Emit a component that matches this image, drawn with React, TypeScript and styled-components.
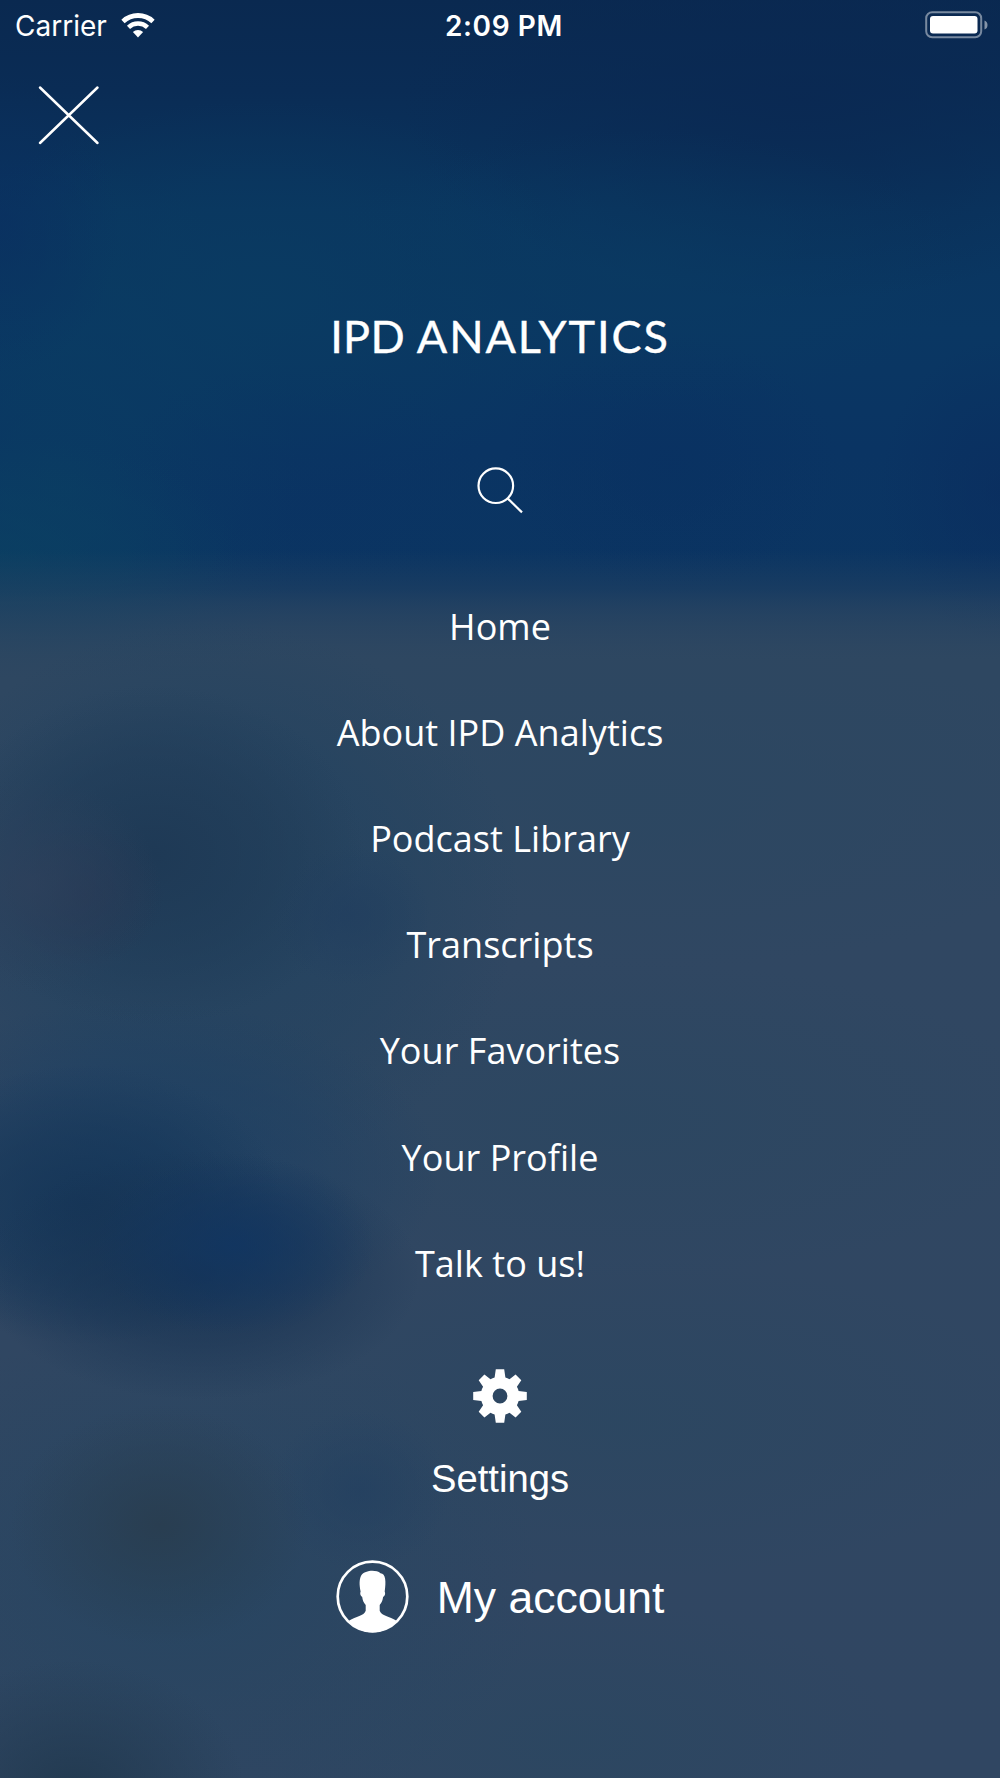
import React from "react";
import styled, { createGlobalStyle } from "styled-components";

const GlobalStyle = createGlobalStyle`
  *, *::before, *::after { box-sizing: border-box; }
  body { margin: 0; background: #2f4762; }
`;

const Screen = styled.main`
  display: flex;
  flex-direction: column;
  width: 1000px;
  height: 1778px;
  overflow: hidden;
  color: #fff;
  background:
    radial-gradient(ellipse 170px 130px at 75px 1790px, rgba(33, 57, 79, 0.9), rgba(33, 57, 79, 0.4) 55%, rgba(33, 57, 79, 0)),
    radial-gradient(ellipse 150px 120px at 160px 1525px, rgba(41, 61, 79, 0.9), rgba(41, 61, 79, 0.4) 55%, rgba(41, 61, 79, 0)),
    radial-gradient(ellipse 90px 80px at 360px 1490px, rgba(35, 64, 96, 0.75), rgba(35, 64, 96, 0)),
    radial-gradient(ellipse 140px 90px at 235px 1245px, rgba(16, 53, 98, 0.8), rgba(16, 53, 98, 0.4) 50%, rgba(16, 53, 98, 0)),
    radial-gradient(ellipse 220px 125px at 200px 1275px, rgba(22, 50, 82, 0.85), rgba(22, 50, 82, 0.45) 55%, rgba(22, 50, 82, 0)),
    radial-gradient(ellipse 200px 140px at 85px 1205px, rgba(20, 52, 86, 0.85), rgba(20, 52, 86, 0.45) 55%, rgba(20, 52, 86, 0)),
    radial-gradient(ellipse 300px 170px at 140px 1170px, rgba(27, 63, 99, 0.9), rgba(27, 63, 99, 0.45) 60%, rgba(27, 63, 99, 0)),
    radial-gradient(ellipse 80px 70px at 350px 915px, rgba(33, 62, 95, 0.75), rgba(33, 62, 95, 0)),
    radial-gradient(ellipse 130px 110px at 30px 885px, rgba(46, 65, 92, 0.8), rgba(46, 65, 92, 0)),
    radial-gradient(ellipse 80px 70px at 85px 895px, rgba(36, 54, 82, 0.7), rgba(36, 54, 82, 0)),
    radial-gradient(ellipse 210px 170px at 155px 855px, rgba(30, 57, 85, 0.95), rgba(30, 57, 85, 0.5) 55%, rgba(30, 57, 85, 0)),
    radial-gradient(ellipse 310px 280px at 210px 900px, rgba(33, 66, 95, 0.85), rgba(33, 66, 95, 0.5) 60%, rgba(33, 66, 95, 0)),
    radial-gradient(ellipse 360px 260px at 180px 1580px, rgba(37, 69, 97, 0.8), rgba(37, 69, 97, 0)),
    radial-gradient(ellipse 430px 160px at 620px 1120px, rgba(43, 71, 97, 0.8), rgba(43, 71, 97, 0)),
    radial-gradient(ellipse 430px 160px at 620px 1420px, rgba(43, 71, 97, 0.8), rgba(43, 71, 97, 0)),
    radial-gradient(ellipse 480px 170px at 640px 800px, rgba(43, 71, 97, 0.75), rgba(43, 71, 97, 0)),
    radial-gradient(ellipse 330px 140px at 570px 1740px, rgba(43, 71, 97, 0.8), rgba(43, 71, 97, 0)),
    linear-gradient(to bottom, rgba(46, 71, 97, 0) 550px, rgba(46, 71, 97, 0.5) 602px, #2e4761 680px, #304762 900px, #304662 1778px),
    radial-gradient(ellipse 240px 120px at 0 555px, rgba(10, 66, 98, 0.6), rgba(10, 66, 98, 0)),
    radial-gradient(ellipse 120px 150px at 1000px 490px, rgba(10, 44, 94, 0.6), rgba(10, 44, 94, 0)),
    radial-gradient(ellipse 170px 130px at 670px 465px, rgba(9, 48, 97, 0.6), rgba(9, 48, 97, 0)),
    radial-gradient(ellipse 190px 120px at 300px 480px, rgba(10, 49, 98, 0.3), rgba(10, 49, 98, 0)),
    radial-gradient(ellipse 120px 150px at 0 225px, rgba(10, 46, 97, 0.6), rgba(10, 46, 97, 0)),
    radial-gradient(ellipse 330px 140px at 640px 270px, rgba(10, 59, 98, 0.6), rgba(10, 59, 98, 0)),
    radial-gradient(ellipse 330px 200px at 260px 300px, rgba(10, 60, 98, 0.8), rgba(10, 60, 98, 0)),
    radial-gradient(ellipse 240px 330px at 60px 480px, rgba(10, 61, 98, 0.7), rgba(10, 61, 98, 0)),
    radial-gradient(ellipse 400px 200px at 800px 100px, rgba(10, 40, 82, 0.8), rgba(10, 40, 82, 0)),
    linear-gradient(to bottom, #0a2950 0, #0a2c55 90px, #0a355f 210px, #0a3763 330px, #0a3463 450px, #0b3562 590px, #2e4761 660px);
`;

const StatusBar = styled.header`
  display: grid;
  grid-template-columns: 1fr auto 1fr;
  align-items: center;
  height: 50px;
  padding: 0 12px 0 15px;
  font-family: Inter, "Liberation Sans", sans-serif;
  font-size: 28px;
  line-height: 34px;
`;

const Network = styled.div`
  display: flex;
  align-items: center;
  gap: 14px;
`;

const Carrier = styled.span`
  padding-top: 1.5px;
`;

const Clock = styled.time`
  padding: 1.5px 0 0 5px;
  font-weight: 600;
  letter-spacing: 0.6px;
`;

const BatterySlot = styled.div`
  display: flex;
  justify-content: flex-end;
`;

const Toolbar = styled.div`
  display: flex;
  height: 130px;
  padding: 35px 0 0 36.5px;
`;

const IconButton = styled.button`
  display: block;
  align-self: flex-start;
  padding: 0;
  border: 0;
  background: none;
  color: inherit;
  line-height: 0;
`;

const Brand = styled.h1`
  display: flex;
  justify-content: center;
  align-items: center;
  height: 312px;
  margin: 0;
  font: 400 45px/54px Lato, "Liberation Sans", sans-serif;
  white-space: pre;
  -webkit-text-stroke: 0.4px #fff;
`;

const BrandWord = styled.span<{ $tracking: number }>`
  letter-spacing: ${({ $tracking }) => $tracking}px;
`;

const SearchRow = styled.div`
  display: flex;
  justify-content: center;
  height: 107px;
  margin-top: -26px;
`;

const Menu = styled.nav`
  display: flex;
  flex-direction: column;
  padding-top: 0.5px;
`;

const MenuItem = styled.a`
  display: flex;
  justify-content: center;
  align-items: center;
  height: 106.2px;
  font: 400 36px/50px "Open Sans", "Noto Sans", sans-serif;
  letter-spacing: 0.03px;
`;

const Settings = styled.a`
  display: flex;
  flex-direction: column;
  align-items: center;
  gap: 33px;
  margin-top: 52px;
  font: 400 38.2px/46px "Liberation Sans", sans-serif;
`;

const Account = styled.a`
  display: flex;
  justify-content: center;
  align-items: center;
  gap: 28px;
  margin-top: 58px;
  font: 400 44.5px/50px "Liberation Sans", sans-serif;
`;

const AccountLabel = styled.span`
  padding-top: 3px;
`;

const WifiIcon = () => (
  <svg width="34" height="25" viewBox="0 0 34 25" fill="none" stroke="#fff">
    <path d="M2 8.4A22 22 0 0 1 32 8.4" strokeWidth="4.8" />
    <path d="M7.5 14.3A14 14 0 0 1 26.5 14.3" strokeWidth="4.5" />
    <path d="M17 24.5L11.9 19A7.5 7.5 0 0 1 22.1 19Z" fill="#fff" stroke="none" />
  </svg>
);

const BatteryIcon = () => (
  <svg width="64" height="28" viewBox="0 0 64 28">
    <rect x="2.2" y="1.2" width="55" height="25" rx="6" fill="none" stroke="#fff" strokeOpacity=".45" strokeWidth="2" />
    <rect x="6" y="5" width="47.5" height="17.6" rx="3" fill="#fff" />
    <path d="M60.5 9.5Q63.5 10.5 63.5 14T60.5 18.5Z" fill="#fff" fillOpacity=".5" />
  </svg>
);

const CloseIcon = () => (
  <svg width="63" height="61" viewBox="0 0 63 61" fill="none" stroke="#fff" strokeWidth="2.5" strokeLinecap="round">
    <path d="M3 2.5L60.5 58M60.5 2.5L3 58" />
  </svg>
);

const SearchIcon = () => (
  <svg width="48" height="48" viewBox="0 0 48 48" fill="none" stroke="#fff" strokeWidth="2.2">
    <circle cx="19.8" cy="19.7" r="17.3" />
    <path d="M31.6 32.4L46 46.4" />
  </svg>
);

const GearIcon = () => (
  <svg width="54" height="54" viewBox="-27 -27 54 54" fill="#fff">
    <path
      fillRule="evenodd"
      d="M-4.2-26.7H4.2L5.4-18.4Q7.5-17.8 9.5-16.7L15.6-21.4L21.3-15.7L16.9-9.2Q18.1-7.2 18.6-5.1L26.8-4V4L18.6 5.1Q18.1 7.2 16.9 9.2L21.3 15.7L15.6 21.4L9.5 16.7Q7.5 17.8 5.4 18.4L4.2 26.7H-4.2L-5.4 18.4Q-7.5 17.8-9.5 16.7L-15.6 21.4L-21.3 15.7L-16.9 9.2Q-18.1 7.2-18.6 5.1L-26.8 4V-4L-18.6-5.1Q-18.1-7.2-16.9-9.2L-21.3-15.7L-15.6-21.4L-9.5-16.7Q-7.5-17.8-5.4-18.4ZM0-7.4A7.4 7.4 0 1 0 0 7.4A7.4 7.4 0 1 0 0-7.4Z"
    />
  </svg>
);

const AvatarIcon = () => (
  <svg width="73" height="73" viewBox="-36.5 -36.5 73 73">
    <circle r="34.8" fill="none" stroke="#fff" strokeWidth="2.7" />
    <path
      fill="#fff"
      d="M-23.5 24.2C-16.5 19.5-8.5 19.5-6.8 14.2V8.5C-9.2 6-9.8 3.5-10.3.5C-12-.5-12.8-3-11.9-5C-13.3-12-13.3-17-11.3-21C-7.5-26.5 3.5-27 8-23.3C13.3-23 13.7-15 12.2-5C13.2-3 12.4-.4 10.6.5C10.1 3.5 9.5 6 7.2 8.5V14.2C9 19.5 17 19.5 24 24.2C17 32.5 9 35.8 0 35.8S-17 32.5-23.5 24.2Z"
    />
  </svg>
);

const menuItems = [
  "Home",
  "About IPD Analytics",
  "Podcast Library",
  "Transcripts",
  "Your Favorites",
  "Your Profile",
  "Talk to us!",
];

export default function App() {
  return (
    <>
      <GlobalStyle />
      <Screen>
        <StatusBar>
          <Network>
            <Carrier>Carrier</Carrier>
            <WifiIcon />
          </Network>
          <Clock>2:09 PM</Clock>
          <BatterySlot>
            <BatteryIcon />
          </BatterySlot>
        </StatusBar>
        <Toolbar>
          <IconButton aria-label="Close">
            <CloseIcon />
          </IconButton>
        </Toolbar>
        <Brand>
          <BrandWord $tracking={0.3}>IPD </BrandWord>
          <BrandWord $tracking={1.9}>ANALYTICS</BrandWord>
        </Brand>
        <SearchRow>
          <IconButton aria-label="Search">
            <SearchIcon />
          </IconButton>
        </SearchRow>
        <Menu>
          {menuItems.map((item) => (
            <MenuItem key={item}>{item}</MenuItem>
          ))}
        </Menu>
        <Settings>
          <GearIcon />
          <span>Settings</span>
        </Settings>
        <Account>
          <AvatarIcon />
          <AccountLabel>My account</AccountLabel>
        </Account>
      </Screen>
    </>
  );
}
